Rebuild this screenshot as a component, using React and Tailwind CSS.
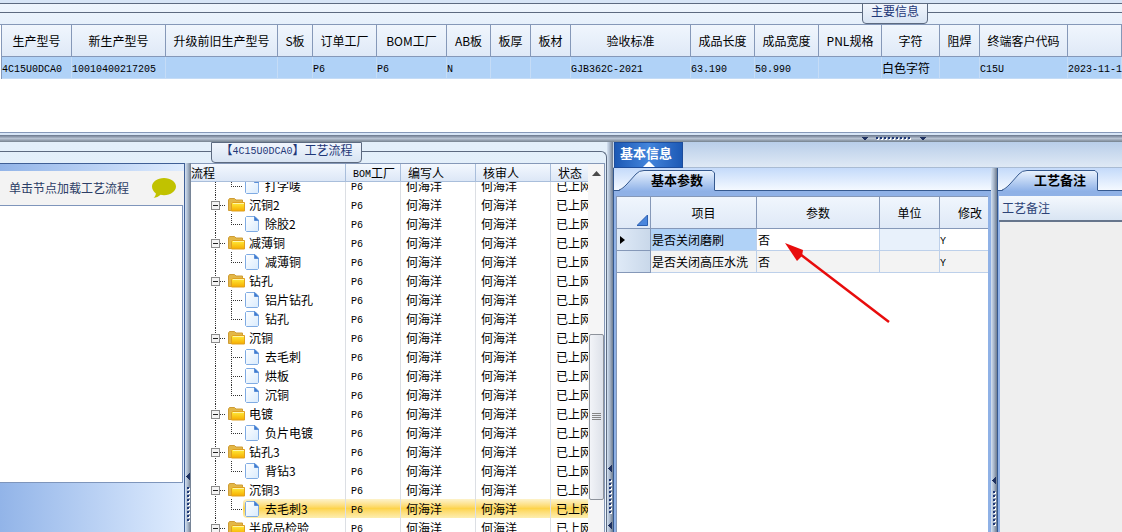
const PRODUCT_COLUMNS = [
  { title: '生产型号', width: 'w-[70px]', value: '4C15U0DCA0' },
  { title: '新生产型号', width: 'w-[94px]', value: '10010400217205' },
  { title: '升级前旧生产型号', width: 'w-[112px]', value: '' },
  { title: 'S板', width: 'w-[35px]', value: '' },
  { title: '订单工厂', width: 'w-[64px]', value: 'P6' },
  { title: 'BOM工厂', width: 'w-[70px]', value: 'P6' },
  { title: 'AB板', width: 'w-[44px]', value: 'N' },
  { title: '板厚', width: 'w-[40px]', value: '' },
  { title: '板材', width: 'w-[40px]', value: '' },
  { title: '验收标准', width: 'w-[120px]', value: 'GJB362C-2021' },
  { title: '成品长度', width: 'w-[64px]', value: '63.190' },
  { title: '成品宽度', width: 'w-[64px]', value: '50.990' },
  { title: 'PNL规格', width: 'w-[63px]', value: '' },
  { title: '字符', width: 'w-[58px]', value: '白色字符', cjk: true },
  { title: '阻焊', width: 'w-[40px]', value: '' },
  { title: '终端客户代码', width: 'w-[88px]', value: 'C15U' },
  { title: '', width: '', value: '2023-11-1' },
];

const STEPS = [
  { name: '打字唛', last: true, clipped: true },
  { name: '沉铜2', folder: true },
  { name: '除胶2', last: true },
  { name: '减薄铜', folder: true },
  { name: '减薄铜', last: true },
  { name: '钻孔', folder: true },
  { name: '铝片钻孔' },
  { name: '钻孔', last: true },
  { name: '沉铜', folder: true },
  { name: '去毛刺' },
  { name: '烘板' },
  { name: '沉铜', last: true },
  { name: '电镀', folder: true },
  { name: '负片电镀', last: true },
  { name: '钻孔3', folder: true },
  { name: '背钻3', last: true },
  { name: '沉铜3', folder: true },
  { name: '去毛刺3', last: true, selected: true },
  { name: '半成品检验', folder: true },
];

const PARAMS = [
  { name: '是否关闭磨刷', value: '否', edit: 'Y', current: true },
  { name: '是否关闭高压水洗', value: '否', edit: 'Y' },
];

const SELECTED = 'bg-linear-to-b from-[#fdf3cb] via-[#fdd44b] to-[#fdeeb0]';

const Code = ({ children }) => (
  <span className="align-[1px] font-['Liberation_Mono',monospace] text-[10px] leading-none">{children}</span>
);

const Grip = ({ vertical, bottomArrow }) => {
  const dots = [0, 1, 2, 3, 4, 5, 6, 7, 8];
  if (!vertical) {
    return (
      <svg width="64" height="6" viewBox="0 0 64 6" className="shrink-0" shapeRendering="crispEdges">
        <path d="M0 1h6L3 5z M58 1h6L61 5z" fill="#1f3261" />
        {dots.map((i) => (
          <g key={i}>
            <rect x={15 + i * 4} y="2" width="2" height="2" fill="#fff" />
            <rect x={14 + i * 4} y="1" width="2" height="2" fill="#1f3878" />
          </g>
        ))}
      </svg>
    );
  }
  return (
    <svg width="5" height="64" viewBox="0 0 5 64" className="shrink-0" shapeRendering="crispEdges">
      <path d="M4 0v7L0 3.5z" fill="#1f3261" />
      {bottomArrow && <path d="M4 57v7L0 60.5z" fill="#1f3261" />}
      {dots.map((i) => (
        <g key={i}>
          <rect x="2" y={15 + i * 4} width="2" height="2" fill="#fff" />
          <rect x="1" y={14 + i * 4} width="2" height="2" fill="#1f3878" />
        </g>
      ))}
    </svg>
  );
};

const FolderIcon = () => (
  <svg width="17" height="14" viewBox="0 0 17 14" className="shrink-0">
    <defs>
      <linearGradient id="folder" x1="0" y1="0" x2="0" y2="1">
        <stop offset="0" stopColor="#ffee3c" />
        <stop offset="1" stopColor="#f6ac00" />
      </linearGradient>
    </defs>
    <path d="M.5 12.500V2L1.500 .5h5L8 2h6.500v10.500z" fill="#e3b746" stroke="#cf9c35" />
    <path d="M3.500 13V5.500L4.500 4.500h12V13z" fill="url(#folder)" stroke="#e0a020" />
    <path d="M5 5.500h11" stroke="#fff6a5" />
  </svg>
);

const FileIcon = () => (
  <svg width="14" height="16" viewBox="0 0 14 16" className="shrink-0">
    <defs>
      <linearGradient id="file" x1="0" y1="0" x2="1" y2="1">
        <stop offset="0" stopColor="#ffffff" />
        <stop offset="1" stopColor="#d9ebfd" />
      </linearGradient>
    </defs>
    <path d="M.5 1.500l1-1h8.500l3.500 3.500v10.500l-1 1h-11l-1-1z" fill="url(#file)" stroke="#7fabe3" />
    <path d="M9.500 .5v4h4z" fill="#3f7bd0" stroke="#5a8fd8" />
  </svg>
);

const FolderBranch = () => (
  <svg width="37" height="19" viewBox="0 0 37 19" className="shrink-0" shapeRendering="crispEdges">
    <path d="M24.500 0v19M29 10.500h6" stroke="#333" strokeDasharray="1 1" />
    <rect x="20.500" y="6.500" width="8" height="8" fill="#f4f4f4" stroke="#8b8b8b" />
    <path d="M22 10.500h5" stroke="#222" />
  </svg>
);

const FileBranch = ({ last }) => (
  <svg width="52" height="19" viewBox="0 0 52 19" className="shrink-0" shapeRendering="crispEdges">
    <path d="M24.500 0v19M42 10.500h9" stroke="#333" strokeDasharray="1 1" />
    <path d={last ? 'M40.500 0v11' : 'M40.500 0v19'} stroke="#333" strokeDasharray="1 1" />
  </svg>
);

const ProductTable = () => (
  <table className="w-full table-fixed border-separate border-spacing-0 border-l border-[#8598b8]">
    <thead>
      <tr className="h-[32px]">
        {PRODUCT_COLUMNS.map((col, i) => (
          <th
            key={i}
            className={`${col.width} border-r border-b border-[#8598b8] bg-linear-to-b from-[#f0f6fd] to-[#dfe9f7] p-0 text-center font-normal whitespace-nowrap`}
          >
            {col.title}
          </th>
        ))}
      </tr>
    </thead>
    <tbody>
      <tr className="h-[22px] bg-[#b0d2f7]">
        {PRODUCT_COLUMNS.map((col, i) => (
          <td key={i} className="border-r border-b border-[#c5dcf6] p-0 whitespace-nowrap">
            {col.cjk ? col.value : <Code>{col.value}</Code>}
          </td>
        ))}
      </tr>
    </tbody>
  </table>
);

const StepRow = ({ step }) => {
  const fill = step.selected ? SELECTED : '';
  const height = step.clipped ? 'h-[13px]' : 'h-[19px]';
  const cell = `flex items-end overflow-hidden ${height}`;
  const inner = 'h-[19px] leading-[19px] shrink-0';

  return (
    <tr>
      <td className="border-r border-[#dcdfe4] p-0">
        <div className={cell}>
          {step.folder ? <FolderBranch /> : <FileBranch last={step.last} />}
          <div className={`flex h-[19px] min-w-0 flex-1 shrink-0 items-center leading-[19px] ${fill} ${step.folder ? 'gap-1' : 'gap-1.5 rounded-l-sm pl-0.5'}`}>
            {step.folder ? <FolderIcon /> : <FileIcon />}
            <span className="whitespace-nowrap">{step.name}</span>
          </div>
        </div>
      </td>
      <td className="border-r border-[#dcdfe4] p-0">
        <div className={cell}>
          <div className={`${inner} ${fill} w-full pl-[5px]`}>
            <Code>P6</Code>
          </div>
        </div>
      </td>
      {['何海洋', '何海洋', '已上网'].map((text, i) => (
        <td key={i} className={`p-0 ${i < 2 ? 'border-r border-[#dcdfe4]' : ''}`}>
          <div className={cell}>
            <div className={`${inner} ${fill} w-full overflow-hidden pl-[5px] whitespace-nowrap`}>{text}</div>
          </div>
        </td>
      ))}
    </tr>
  );
};

const StepTable = () => (
  <div className="min-w-0 flex-1 overflow-hidden">
    <table className="w-full table-fixed border-separate border-spacing-0">
      <thead>
        <tr className="h-[18px] bg-linear-to-b from-[#f3f8fe] to-[#dbe6f6] text-left leading-[16px]">
          <th className="w-[155px] border-r border-b border-[#a9bedb] p-0 font-normal">流程</th>
          <th className="w-[55px] border-r border-b border-[#a9bedb] p-0 pl-[7px] font-normal whitespace-nowrap">
            <Code>BOM</Code>工厂
          </th>
          <th className="w-[75px] border-r border-b border-[#a9bedb] p-0 pl-[7px] font-normal">编写人</th>
          <th className="w-[75px] border-r border-b border-[#a9bedb] p-0 pl-[7px] font-normal">核审人</th>
          <th className="border-b border-[#a9bedb] p-0 pl-[7px] font-normal">状态</th>
        </tr>
      </thead>
      <tbody>
        {STEPS.map((step, i) => (
          <StepRow key={i} step={step} />
        ))}
      </tbody>
    </table>
  </div>
);

const ScrollBar = () => (
  <div className="flex w-4 shrink-0 flex-col items-center bg-[#f5f5f6]">
    <button type="button" aria-label="向上滚动" className="flex h-[18px] w-full items-center justify-center">
      <svg width="9" height="5" viewBox="0 0 9 5">
        <path d="M4.500 0L9 5H0z" fill="#4b4b4b" />
      </svg>
    </button>
    <div className="mt-[152px] flex h-[166px] w-[15px] shrink-0 items-center justify-center rounded-xs border border-[#8d929b] bg-linear-to-r from-[#f2f4f8] to-[#dde1e9]">
      <svg width="9" height="8" viewBox="0 0 9 8" shapeRendering="crispEdges">
        <path d="M0 .5h9M0 2.500h9M0 4.500h9M0 6.500h9" stroke="#858585" />
      </svg>
    </div>
  </div>
);

const Splitter = ({ pad, bottomArrow }) => (
  <div className={`flex w-[6px] shrink-0 flex-col items-center overflow-hidden bg-linear-to-r from-[#d5e3f3] via-[#a5b4c8] to-[#6f7c8e] ${pad}`}>
    <Grip vertical bottomArrow={bottomArrow} />
  </div>
);

const SlantTab = ({ children }) => (
  <button type="button" className="relative h-[20px] w-[96px] pl-8 text-left text-[13px] leading-[20px] font-bold whitespace-nowrap text-black">
    <svg width="96" height="21" viewBox="0 0 96 21" className="absolute top-0 left-0">
      <defs>
        <linearGradient id="slant" x1="0" y1="0" x2="0" y2="1">
          <stop offset="0" stopColor="#eaf3fe" />
          <stop offset="1" stopColor="#8fb2e8" />
        </linearGradient>
      </defs>
      <path d="M0 21C3 19 5 17 8 14L17 4Q20 .5 25 .5H93L95.500 3V21z" fill="url(#slant)" />
      <path d="M0 20C3 19 5 17 8 14L17 4Q20 .5 25 .5H93L95.500 3V20" fill="none" stroke="#35598f" />
    </svg>
    <span className="relative">{children}</span>
  </button>
);

const TabStrip = ({ pad, title }) => (
  <div className={`flex h-[23px] shrink-0 items-end border-b border-[#35598f] bg-linear-to-b from-[#c4dafa] to-[#f4f9ff] ${pad}`}>
    <SlantTab>{title}</SlantTab>
  </div>
);

const FlowPreview = () => (
  <div className="flex w-[185px] shrink-0 flex-col border-t border-r border-[#3f5f96] bg-linear-to-r from-[#92b4e8] to-[#dfecfe]">
    <div className="mt-[7px] flex h-[34px] shrink-0 items-center justify-between bg-[#f3f3f3] pr-2 pl-[9px] text-[#2c3d66]">
      <span>单击节点加载工艺流程</span>
      <svg width="24" height="20" viewBox="0 0 24 20">
        <path d="M12 0c6.600 0 12 3.800 12 8.600s-5.400 8.600-12 8.600c-1.200 0-2.400-.1-3.500-.4C6.500 18.700 4.200 19.600 1.500 20c1.300-1.200 2.200-2.600 2.400-4.600C1.500 13.800 0 11.400 0 8.600 0 3.800 5.400 0 12 0z" fill="#c1c200" />
      </svg>
    </div>
    <div className="mr-px flex-1 border-t border-r border-b border-[#7e95bb] bg-white" />
    <div className="h-[49px] shrink-0" />
  </div>
);

const ParamTable = () => (
  <table className="w-full table-fixed border-separate border-spacing-0">
    <thead>
      <tr className="h-[33px]">
        <th aria-label="选择" className="w-[34px] border-t border-r border-b border-[#8598b8] bg-linear-to-b from-[#f0f6fd] to-[#dfe9f7] p-0">
          <svg width="11" height="11" viewBox="0 0 11 11" className="mt-4 mr-0.5 ml-auto block">
            <path d="M10.500 0v10.500H0z" fill="#4a86dd" stroke="#2b5fb0" />
          </svg>
        </th>
        <th className="w-[106px] border-t border-r border-b border-[#8598b8] bg-linear-to-b from-[#f0f6fd] to-[#dfe9f7] p-0 text-center font-normal">项目</th>
        <th className="border-t border-r border-b border-[#8598b8] bg-linear-to-b from-[#f0f6fd] to-[#dfe9f7] p-0 text-center font-normal">参数</th>
        <th className="w-[60px] border-t border-r border-b border-[#8598b8] bg-linear-to-b from-[#f0f6fd] to-[#dfe9f7] p-0 text-center font-normal">单位</th>
        <th className="w-[48px] border-t border-b border-[#8598b8] bg-linear-to-b from-[#f0f6fd] to-[#dfe9f7] p-0 pr-1.5 text-right font-normal">修改</th>
      </tr>
    </thead>
    <tbody>
      {PARAMS.map((row) => (
        <tr key={row.name} className={`h-[22px] ${row.current ? 'bg-white' : 'bg-[#f3f3f3]'}`}>
          <td className="border-r border-b border-[#8598b8] bg-linear-to-r from-[#dfeaf7] to-[#c9d8ea] p-0 pl-[3px]">
            {row.current && (
              <svg width="5" height="8" viewBox="0 0 5 8">
                <path d="M0 0l5 4-5 4z" fill="#000" />
              </svg>
            )}
          </td>
          <td className={`border-r border-b border-[#bdd0ea] p-0 pl-px whitespace-nowrap ${row.current ? 'bg-[#b0d2f7]' : ''}`}>{row.name}</td>
          <td className="border-r border-b border-[#bdd0ea] p-0 pl-px">{row.value}</td>
          <td className={`border-r border-b border-[#bdd0ea] p-0 ${row.current ? 'bg-[#e8f1fb]' : ''}`} />
          <td className="border-b border-[#bdd0ea] p-0">
            <Code>{row.edit}</Code>
          </td>
        </tr>
      ))}
    </tbody>
  </table>
);

export default function App() {
  return (
    <div className="relative flex h-screen flex-col overflow-hidden bg-[#eaf3fc] font-['Noto_Sans_CJK_SC',sans-serif] text-[12px] leading-[18px] text-black">
      {/* main info */}
      <section className="shrink-0">
        <div className="h-1 border-b border-[#5c6a80] bg-[#d7e5f6]" />
        <div className="relative h-5 bg-linear-to-b from-[#eef5fd] to-[#e6f0fb] pt-2">
          <div className="border-t border-[#5c6a80]" />
          <h2 className="absolute -top-px right-[194px] h-[21px] w-[66px] rounded-b-sm border border-[#5c6a80] bg-linear-to-b from-[#f1f6fd] to-[#d8e4f3] text-center leading-[14px] text-[#1f3878]">
            主要信息
          </h2>
        </div>
        <div className="h-[109px] border-t border-b border-[#8598b8] bg-white pl-px">
          <ProductTable />
        </div>
        <div className="flex h-[9px] justify-end border-t-2 border-[#d7e5f6] bg-linear-to-b from-[#68758a] via-[#b7c2d2] to-[#75828f] pt-px pr-[196px]">
          <Grip />
        </div>
      </section>

      <div className="flex min-h-0 flex-1">
        {/* process flow */}
        <section className="flex w-[607px] shrink-0 flex-col bg-linear-to-b from-[#e3effa] to-[#eef6fe]">
          <div className="relative h-[21px] shrink-0 pt-[9px]">
            <div className="h-3 rounded-tr-md border-t border-r border-[#5c6a80]" />
            <h2 className="absolute top-0 left-[211px] h-[21px] w-[151px] rounded-b-sm border border-[#5c6a80] bg-linear-to-b from-[#f1f6fd] to-[#d8e4f3] text-center leading-[14px] whitespace-nowrap text-[#1f3878]">
              【<Code>4C15U0DCA0</Code>】工艺流程
            </h2>
          </div>
          <div className="flex min-h-0 flex-1 border-r border-[#5c6a80]">
            <FlowPreview />
            <Splitter pad="pt-[310px]" />
            <div className="mr-px flex min-w-0 flex-1 border-t border-r border-[#8598b8] bg-white">
              <StepTable />
              <ScrollBar />
            </div>
          </div>
        </section>

        <Splitter pad="pt-[323px]" bottomArrow />

        {/* parameters and remarks */}
        <section className="flex min-w-0 flex-1 flex-col">
          <div className="flex h-[26px] shrink-0 border-b border-[#a9bbd3] bg-linear-to-b from-[#b9cee9] to-[#dfe9f5] pl-px">
            <button type="button" className="relative h-[26px] w-[69px] border border-[#1d4d9c] bg-linear-to-r from-[#1c59b5] via-[#4385dc] to-[#1c59b5] pb-1 pl-[5px] text-left text-[13px] leading-[20px] font-bold whitespace-nowrap text-white">
              基本信息
              <svg width="12" height="6" viewBox="0 0 12 6" className="absolute bottom-0 left-[28px]">
                <path d="M6 0l6 6H0z" fill="#fff" />
              </svg>
            </button>
          </div>
          <div className="flex min-h-0 flex-1">
            <div className="flex min-w-0 flex-1 flex-col border-l border-[#35598f] bg-[#8fb1e6]">
              <TabStrip pad="pl-[5px]" title="基本参数" />
              <div className="mt-[5px] mr-[3px] ml-0.5 min-h-0 flex-1 border-l border-[#8598b8] bg-white">
                <ParamTable />
              </div>
            </div>
            <Splitter pad="pt-[309px]" />
            <div className="flex w-[125px] shrink-0 flex-col border-l border-[#35598f] bg-[#8fb1e6]">
              <TabStrip pad="pl-1" title="工艺备注" />
              <h3 className="mt-[5px] ml-px flex h-[26px] shrink-0 items-center border-b-2 border-[#66758c] bg-linear-to-b from-[#f4f8fd] to-[#d9e5f3] pl-[3px] text-[#2c4377]">
                工艺备注
              </h3>
              <div className="ml-0.5 flex-1 bg-[#efefef]" />
            </div>
          </div>
        </section>
      </div>

      {/* callout arrow */}
      <svg width="108" height="82" viewBox="0 0 108 82" className="pointer-events-none absolute top-[242px] left-[784px]">
        <path d="M12 9L105 80" stroke="#e80c0c" strokeWidth="2.500" />
        <path d="M1 1l18 7-1 6-5 5z" fill="#e80c0c" />
      </svg>
    </div>
  );
}
